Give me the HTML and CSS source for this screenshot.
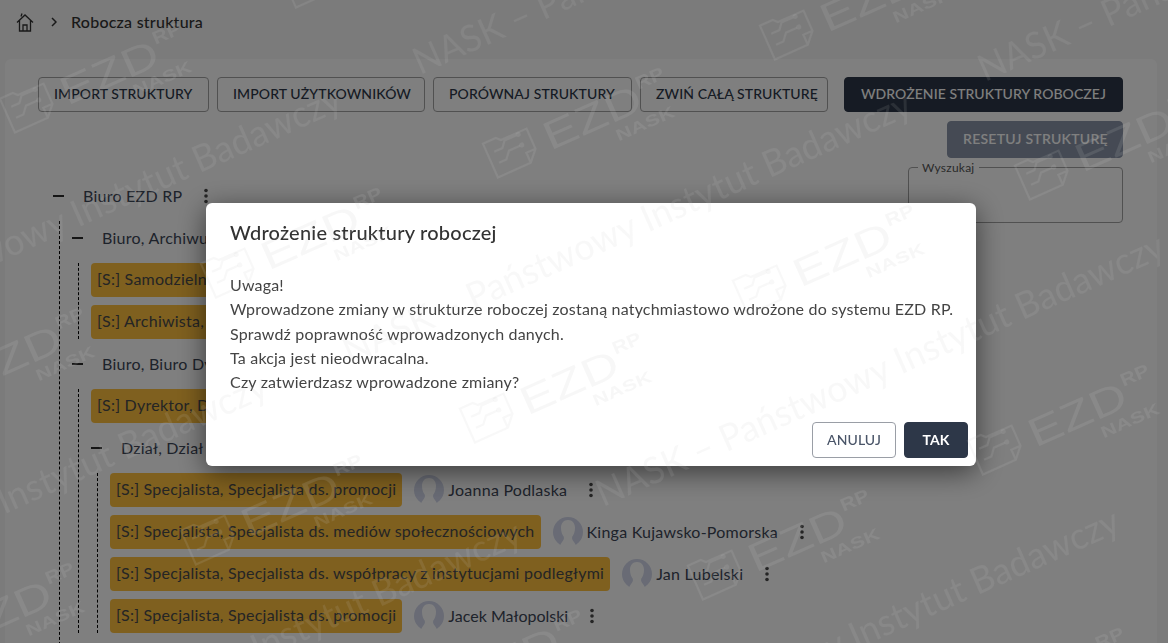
FILE: index.html
```html
<!DOCTYPE html>
<html lang="pl">
<head>
<meta charset="utf-8">
<title>Robocza struktura</title>
<link rel="stylesheet" href="styles.css">
</head>
<body>
<svg class="sprites" width="0" height="0" aria-hidden="true">
  <defs>
    <symbol id="avatar" viewBox="0 0 30 30">
      <circle cx="15" cy="15" r="15" fill="#d2d7ea"/>
      <path d="M15 3c-4.500 0-7 3.400-7 7.800 0 4 1.200 7 2.800 9 .5 2-.3 3.800-1.800 5.200L6 30h18l-3-5c-1.500-1.400-2.300-3.200-1.800-5.200 1.600-2 2.800-5 2.800-9C22 6.400 19.500 3 15 3z" fill="#fff"/>
    </symbol>
    <symbol id="kebab" viewBox="0 0 6 16">
      <circle cx="3" cy="2.500" r="1.800"/><circle cx="3" cy="8" r="1.800"/><circle cx="3" cy="13.500" r="1.800"/>
    </symbol>
    <g id="wm-logo">
      <path class="wm-line" d="M-23-15h14l4 4h28v22l-10 11h-36zM13 22v-11h10M-16-3h9l5-6h13M-16 9h8l6-7h12"/>
      <circle class="wm-fill" cx="13" cy="-9" r="2.500"/><circle class="wm-fill" cx="12" cy="2" r="2.500"/>
      <text class="wm-ezd" x="36" y="19" textLength="104" lengthAdjust="spacingAndGlyphs">EZD</text>
      <text class="wm-rp" x="141" y="-1" textLength="30" lengthAdjust="spacingAndGlyphs">RP</text>
      <text class="wm-nask" x="102" y="38" textLength="63" lengthAdjust="spacingAndGlyphs">NASK</text>
    </g>
    <text id="wm-text" class="wm-caption" textLength="618" lengthAdjust="spacingAndGlyphs">NASK – Państwowy Instytut Badawczy</text>
  </defs>
</svg>

<div class="page">
  <nav class="breadcrumb">
    <svg class="home" viewBox="0 0 18 20" width="18" height="20" aria-hidden="true">
      <path d="M1 10.500 9 3l8 7.500M3.500 8.500V19h11V8.500M7 19v-6h4v6M5 4.500 6 1.500"/>
    </svg>
    <svg class="chevron" viewBox="0 0 6 10" width="6" height="10" aria-hidden="true"><path d="m1 1 4 4-4 4"/></svg>
    <span class="crumb">Robocza struktura</span>
  </nav>

  <main class="card">
    <div class="toolbar">
      <button class="btn w-import">IMPORT STRUKTURY</button>
      <button class="btn w-users">IMPORT UŻYTKOWNIKÓW</button>
      <button class="btn w-compare">PORÓWNAJ STRUKTURY</button>
      <button class="btn w-collapse">ZWIŃ CAŁĄ STRUKTURĘ</button>
      <button class="btn btn-dark w-deploy">WDROŻENIE STRUKTURY ROBOCZEJ</button>
      <button class="btn btn-muted w-reset">RESETUJ STRUKTURĘ</button>
    </div>

    <div class="content">
      <div class="tree">
        <div class="row"><i class="minus"></i><span class="unit">Biuro EZD RP</span><svg class="kebab"><use href="#kebab"/></svg></div>
        <div class="branch">
          <div class="row"><i class="minus"></i><span class="unit">Biuro, Archiwum</span></div>
          <div class="branch">
            <div class="row"><span class="chip">[S:] Samodzielne stanowisko</span></div>
            <div class="row"><span class="chip">[S:] Archiwista, Archiwista</span></div>
          </div>
          <div class="row"><i class="minus"></i><span class="unit">Biuro, Biuro Dyrektora</span></div>
          <div class="branch">
            <div class="row"><span class="chip">[S:] Dyrektor, Dyrektor Biura</span></div>
            <div class="row"><i class="minus"></i><span class="unit">Dział, Dział Promocji</span></div>
            <div class="branch">
              <div class="row"><span class="chip">[S:] Specjalista, Specjalista ds. promocji</span><svg class="avatar"><use href="#avatar"/></svg><span class="person">Joanna Podlaska</span><svg class="kebab"><use href="#kebab"/></svg></div>
              <div class="row"><span class="chip">[S:] Specjalista, Specjalista ds. mediów społecznościowych</span><svg class="avatar"><use href="#avatar"/></svg><span class="person">Kinga Kujawsko-Pomorska</span><svg class="kebab"><use href="#kebab"/></svg></div>
              <div class="row"><span class="chip">[S:] Specjalista, Specjalista ds. współpracy z instytucjami podległymi</span><svg class="avatar"><use href="#avatar"/></svg><span class="person">Jan Lubelski</span><svg class="kebab"><use href="#kebab"/></svg></div>
              <div class="row"><span class="chip">[S:] Specjalista, Specjalista ds. promocji</span><svg class="avatar"><use href="#avatar"/></svg><span class="person tight">Jacek Małopolski</span><svg class="kebab"><use href="#kebab"/></svg></div>
            </div>
          </div>
          <div class="row"></div>
        </div>
      </div>
      <fieldset class="search">
        <legend>Wyszukaj</legend>
      </fieldset>
    </div>
  </main>
</div>

<div class="backdrop"></div>

<section class="modal" role="dialog" aria-modal="true">
  <h2 class="modal-title">Wdrożenie struktury roboczej</h2>
  <div class="modal-body">
    <p>Uwaga!</p>
    <p>Wprowadzone zmiany w strukturze roboczej zostaną natychmiastowo wdrożone do systemu EZD RP.</p>
    <p>Sprawdź poprawność wprowadzonych danych.</p>
    <p>Ta akcja jest nieodwracalna.</p>
    <p>Czy zatwierdzasz wprowadzone zmiany?</p>
  </div>
  <div class="modal-actions">
    <button class="btn btn-white w-cancel">ANULUJ</button>
    <button class="btn btn-confirm w-ok">TAK</button>
  </div>
</section>

<svg class="watermark" width="1168" height="643" aria-hidden="true">
  <use href="#wm-logo" transform="translate(27 103) rotate(-24)"/>
  <use href="#wm-logo" transform="translate(510 148) rotate(-24)"/>
  <use href="#wm-logo" transform="translate(787 30) rotate(-24)"/>
  <use href="#wm-logo" transform="translate(1042 170) rotate(-24)"/>
  <use href="#wm-logo" transform="translate(228 268) rotate(-24)"/>
  <use href="#wm-logo" transform="translate(760 285) rotate(-24)"/>
  <use href="#wm-logo" transform="translate(487 413) rotate(-24)"/>
  <use href="#wm-logo" transform="translate(995 445) rotate(-24)"/>
  <use href="#wm-logo" transform="translate(-70 388) rotate(-24)"/>
  <use href="#wm-logo" transform="translate(208 535) rotate(-24)"/>
  <use href="#wm-logo" transform="translate(715 570) rotate(-24)"/>
  <use href="#wm-logo" transform="translate(-80 643) rotate(-24)"/>
  <use href="#wm-logo" transform="translate(428 690) rotate(-24)"/>
  <use href="#wm-logo" transform="translate(970 708) rotate(-24)"/>
  <use href="#wm-logo" transform="translate(308 -22) rotate(-24)"/>
  <use href="#wm-text" transform="translate(420 75) rotate(-24)"/>
  <use href="#wm-text" transform="translate(985 82) rotate(-24)"/>
  <use href="#wm-text" transform="translate(-220 360) rotate(-24)"/>
  <use href="#wm-text" transform="translate(350 365) rotate(-24)"/>
  <use href="#wm-text" transform="translate(603 507) rotate(-24)"/>
  <use href="#wm-text" transform="translate(-294 647) rotate(-24)"/>
  <use href="#wm-text" transform="translate(-40 794) rotate(-24)"/>
  <use href="#wm-text" transform="translate(558 782) rotate(-24)"/>
</svg>
</body>
</html>
```
FILE: styles.css
```css
* { box-sizing: border-box; }
html, body { margin: 0; height: 643px; overflow: hidden; }
body {
  font-family: "Lato", "Noto Sans", sans-serif;
  font-size: 16px;
  letter-spacing: .24px;
  color: #2d3748;
  background: #f6f6f6;
}
.sprites { position: absolute; }
.page { height: 643px; overflow: hidden; }

.breadcrumb { height: 59px; padding: 0 0 15px 16px; display: flex; align-items: center; }
.home { fill: none; stroke: #333; stroke-width: 1.300; }
.chevron { margin-left: 17px; fill: none; stroke: #333; stroke-width: 1.500; }
.crumb { margin-left: 14px; padding-bottom: 2px; font-weight: 500; color: #333; }

.card {
  margin: 0 11px 0 5px;
  padding: 18px 34px 0 33px;
  height: 700px;
  background: #fff;
  border-radius: 6px 6px 0 0;
}

.toolbar { display: flex; flex-wrap: wrap; justify-content: flex-end; gap: 9px 8px; }
.btn {
  height: 35px;
  padding: 0 0 2px 15px;
  text-align: left;
  font: 500 14px "Lato", "Noto Sans", sans-serif;
  letter-spacing: .1px;
  white-space: nowrap;
  color: #2d3748;
  background: #fff;
  border: 1px solid #a2a2a2;
  border-radius: 4px;
}
.btn-dark { padding-left: 16px; background: #2d3748; border-color: #2d3748; color: #fff; margin-left: 8px; letter-spacing: .07px; }
.btn-muted { height: 37px; background: #8a95a8; border-color: #8a95a8; color: #fff; font-weight: 600; letter-spacing: .25px; }
.w-import { width: 171px; }
.w-users { width: 208px; }
.w-compare { width: 199px; }
.w-collapse { width: 188px; }
.w-deploy { width: 279px; }
.w-reset { width: 176px; }

.content { display: flex; margin-top: 9px; }
.tree { flex: 1; min-width: 0; margin-left: 15px; padding-top: 12px; display: flex; flex-direction: column; gap: 8px; }
.branch { margin-left: 6px; padding-left: 12px; border-left: 1px dashed #000; display: flex; flex-direction: column; gap: 8px; }
.row { height: 34px; display: flex; align-items: center; white-space: nowrap; }
.minus { flex: none; width: 11px; height: 2px; margin-right: 19px; background: #2b2b2b; }
.unit { padding-bottom: 2px; color: #3d4656; }
.chip { padding: 0 6px; height: 34px; line-height: 32px; background: #fec03e; border-radius: 4px; color: #4a4a4a; }
.avatar { flex: none; width: 30px; height: 30px; margin: 0 4px 0 12px; }
.person { padding-bottom: 2px; color: #3d4656; }
.tight { letter-spacing: 0; }
.kebab { flex: none; width: 6px; height: 16px; margin-left: 21px; fill: #4a4a4a; }

.search {
  flex: none;
  width: 215px;
  height: 56px;
  margin: 0;
  padding: 0 0 0 9px;
  border: 1px solid #a2a2a2;
  border-radius: 4px;
}
.search legend { padding: 0 4px; font-size: 12px; line-height: 1px; color: #555; }

.backdrop { position: fixed; inset: 0; background: rgba(0, 0, 0, .5); }

.modal {
  position: fixed;
  left: 206px;
  top: 203px;
  width: 770px;
  height: 263px;
  padding: 17px 8px 8px 24px;
  display: flex;
  flex-direction: column;
  letter-spacing: .19px;
  background: #fff;
  border-radius: 6px;
  box-shadow: 0 6px 28px rgba(0, 0, 0, .55);
}
.modal-title { margin: 0; font-size: 20px; line-height: 24px; font-weight: 500; letter-spacing: .22px; color: #333; }
.modal-body { margin-top: 29px; line-height: 24.300px; color: #444; }
.modal-body p { margin: 0; }
.modal-actions { margin-top: auto; display: flex; justify-content: flex-end; gap: 8px; }
.btn-white { height: 36px; padding-left: 0; text-align: center; border-color: #9a9ea6; color: #4a5568; }
.btn-confirm { height: 36px; padding-left: 0; text-align: center; background: #2d3748; border-color: #2d3748; color: #fff; font-weight: 700; }
.w-cancel { width: 84px; }
.w-ok { width: 64px; }

.watermark { position: fixed; left: 0; top: 0; pointer-events: none; }
.wm-line { fill: none; stroke: rgba(200, 200, 200, .13); stroke-width: 2.200; }
.wm-fill { fill: rgba(200, 200, 200, .13); }
.wm-ezd { font: 400 40px "Liberation Sans", sans-serif; fill: rgba(200, 200, 200, .14); }
.wm-rp { font: 700 18px "Liberation Sans", sans-serif; fill: rgba(200, 200, 200, .14); }
.wm-nask { font: 900 16px "Liberation Sans", sans-serif; fill: rgba(200, 200, 200, .14); }
.wm-caption { font: 400 37px "Lato", sans-serif; fill: rgba(200, 200, 200, .12); }
```
